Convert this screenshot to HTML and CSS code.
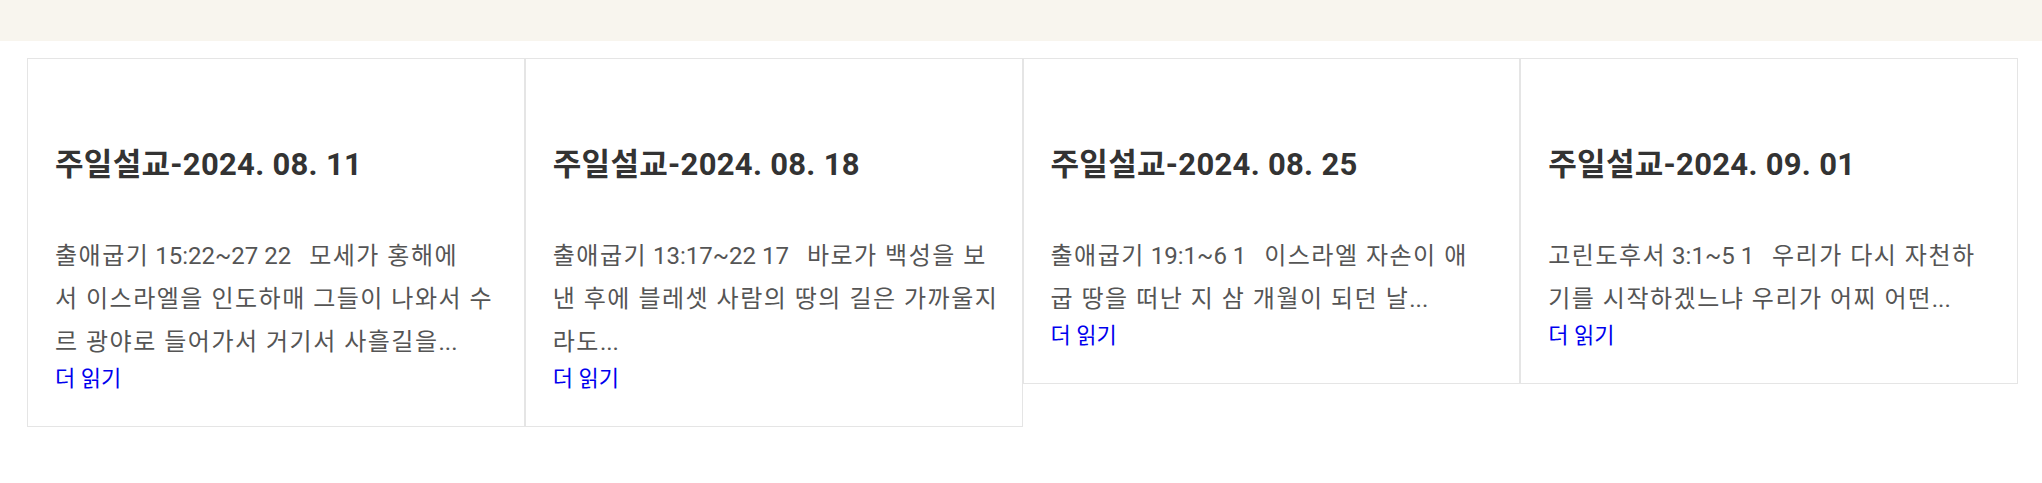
FILE: index.html
```html
<!DOCTYPE html>
<html lang="ko">
<head>
  <meta charset="UTF-8" />
  <meta name="viewport" content="width=device-width, initial-scale=1.0"/>
  <title>주일설교</title>
  <link rel="stylesheet" href="styles.css">
</head>
<body>

  <div class="top-bar"></div>

  <div class="sermons">
    <div class="sermon">
      <h2>주일설교-2024. 08. 11</h2>
      <p>출애굽기<span class="verse"> 15:22~27 22&nbsp;&nbsp;&nbsp;</span>모세가 홍해에<br>서 이스라엘을 인도하매 그들이 나와서 수<br>르 광야로 들어가서 거기서 사흘길을<span class="verse">...</span></p>
      <a class="more" href="#">더 읽기</a>
    </div>

    <div class="sermon">
      <h2>주일설교-2024. 08. 18</h2>
      <p>출애굽기<span class="verse"> 13:17~22 17&nbsp;&nbsp;&nbsp;</span>바로가 백성을 보<br>낸 후에 블레셋 사람의 땅의 길은 가까울지<br>라도<span class="verse">...</span></p>
      <a class="more" href="#">더 읽기</a>
    </div>

    <div class="sermon">
      <h2>주일설교-2024. 08. 25</h2>
      <p>출애굽기<span class="verse"> 19:1~6 1&nbsp;&nbsp;&nbsp;</span>이스라엘 자손이 애<br>굽 땅을 떠난 지 삼 개월이 되던 날<span class="verse">...</span></p>
      <a class="more" href="#">더 읽기</a>
    </div>

    <div class="sermon">
      <h2>주일설교-2024. 09. 01</h2>
      <p>고린도후서<span class="verse"> 3:1~5 1&nbsp;&nbsp;&nbsp;</span>우리가 다시 자천하<br>기를 시작하겠느냐 우리가 어찌 어떤<span class="verse">...</span></p>
      <a class="more" href="#">더 읽기</a>
    </div>
  </div>

</body>
</html>
```

FILE: styles.css
```css
body {
  margin: 0;
  background-color: #fff;
  font-family: Roboto, "Noto Sans CJK KR", sans-serif;
  color: #555;
}

.top-bar {
  height: 41px;
  background-color: #f8f5ee;
}

.sermons {
  display: flex;
  align-items: flex-start;
  padding: 17px 24px 0 27px;
}

.sermon {
  flex: 1;
  width: 0;
  border: 1px solid #e5e5e5;
  padding: 87px 27px 32px;
}

.sermon h2 {
  margin: 0 0 52px;
  font-size: 31px;
  line-height: 37px;
  font-weight: bold;
  letter-spacing: 0.3px;
  color: #333;
}

/* excerpt lines are cut where the original cut them */
.sermon p {
  margin: 0;
  font-size: 24px;
  line-height: 43px;
  letter-spacing: 1.5px;
  white-space: nowrap;
}

.verse {
  letter-spacing: 0;
}

.more {
  display: block;
  font-size: 22px;
  line-height: 30px;
  color: #00e;
  text-decoration: none;
}
```
